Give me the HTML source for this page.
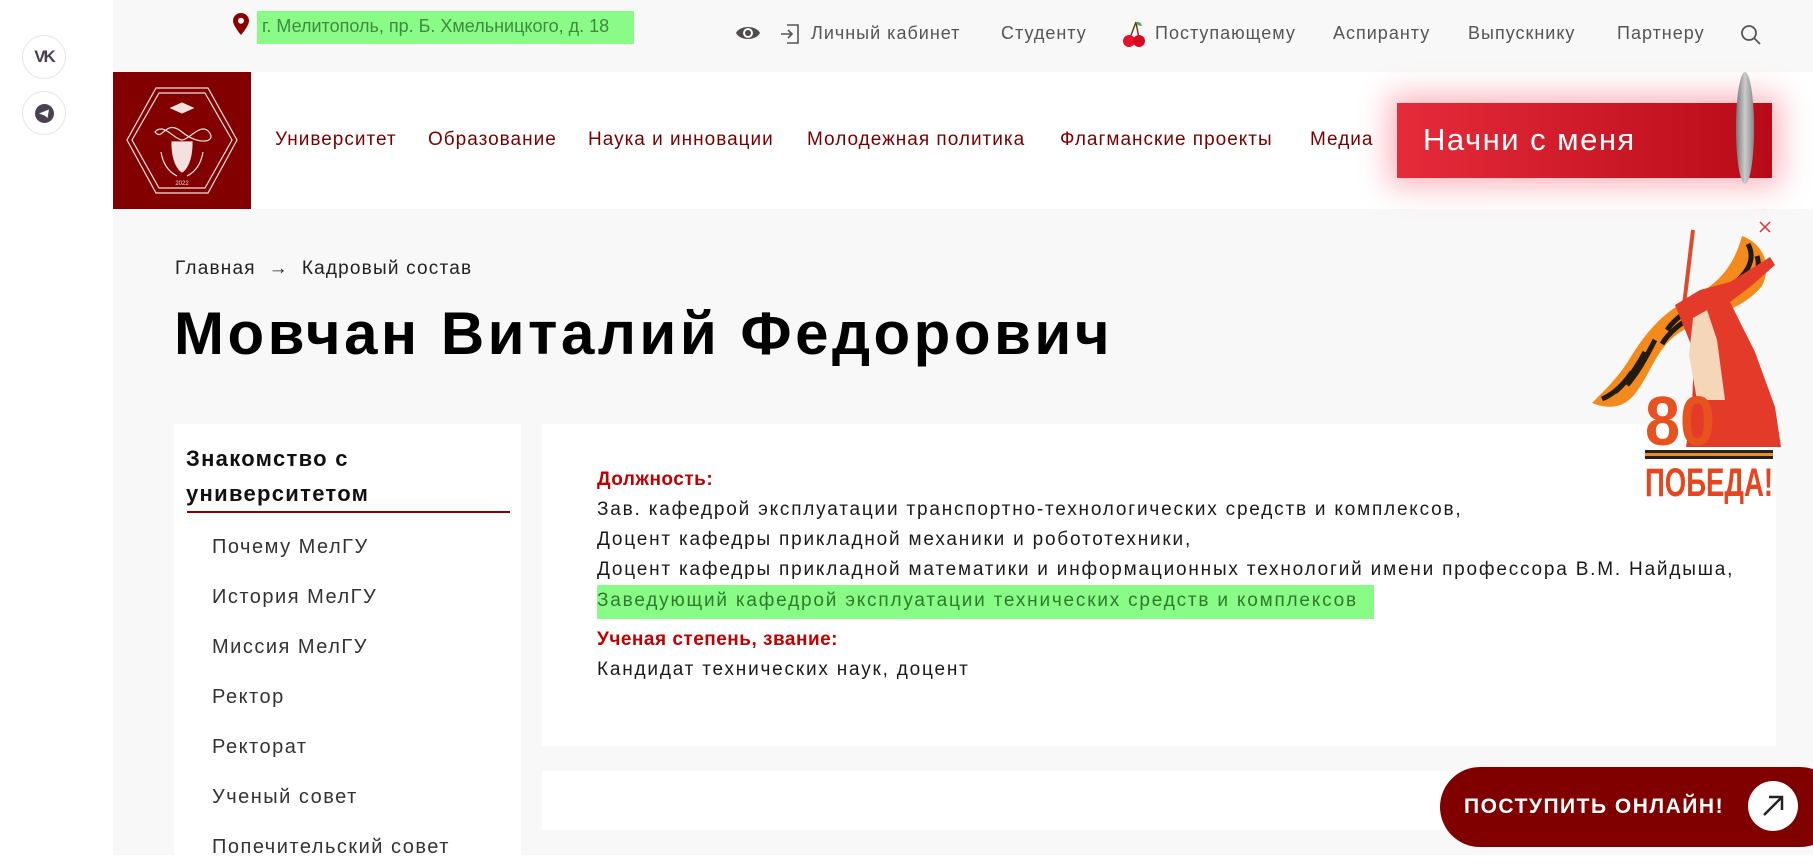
<!DOCTYPE html>
<html><head><meta charset="utf-8"><style>
*{margin:0;padding:0;box-sizing:border-box}
body{width:1813px;height:855px;overflow:hidden;background:#fff;font-family:"Liberation Sans",sans-serif;position:relative}
.a{position:absolute;white-space:nowrap}
.top{color:#555;font-size:18px;letter-spacing:1px}
.nav{color:#7a0000;font-size:19px;top:129px;letter-spacing:1px}
.side{color:#333;font-size:20px;left:212px;letter-spacing:1.5px}
.ct{font-size:19px;color:#1a1a1a;left:597px;letter-spacing:1.8px}
</style></head><body>
<div class="a" style="left:113px;top:0;width:1700px;height:855px;background:#f8f8f8"></div>
<!-- social -->
<div class="a" style="left:22px;top:35px;width:44px;height:44px;border:1px solid #e6e6e6;border-radius:50%;background:#fff;text-align:center;line-height:42px;font-weight:bold;font-size:17px;color:#4a4050;letter-spacing:-2px">VK</div>
<div class="a" style="left:22px;top:91px;width:44px;height:44px;border:1px solid #e6e6e6;border-radius:50%;background:#fff"><div style="margin:12px auto;width:19px;height:19px;border-radius:50%;background:#4a4050;position:relative"><svg width="19" height="19" viewBox="0 0 19 19" style="position:absolute;left:0;top:0"><path d="M4 9.5 L14 5.5 L12.5 14 L9.5 11.5 Z" fill="#fff"/></svg></div></div>
<!-- top bar -->
<svg class="a" style="left:233px;top:13px" width="16" height="22" viewBox="0 0 16 22"><path d="M8 0C3.6 0 0 3.4 0 7.8 0 13 8 22 8 22s8-9 8-14.2C16 3.4 12.4 0 8 0z" fill="#8b0000"/><circle cx="8" cy="7.8" r="3" fill="#f8f8f8"/></svg>
<div class="a" style="left:257px;top:11px;width:377px;height:33px;background:#88fc86"></div>
<div class="a" style="left:262px;top:16px;font-size:18px;color:#3f8a3f">г. Мелитополь, пр. Б. Хмельницкого, д. 18</div>
<svg class="a" style="left:735px;top:23px" width="26" height="20" viewBox="0 0 26 20"><path d="M1 10C5 2 21 2 25 10 21 18 5 18 1 10z" fill="#4e4a4e"/><circle cx="13" cy="10" r="5" fill="#f8f8f8"/><circle cx="13" cy="10" r="3" fill="#4e4a4e"/></svg>
<svg class="a" style="left:779px;top:23px" width="22" height="22" viewBox="0 0 22 22" fill="none" stroke="#555" stroke-width="1.6"><path d="M8 2h11v18H8M2 11h11M9 7l4 4-4 4"/></svg>
<div class="a top" style="left:811px;top:23px">Личный кабинет</div>
<div class="a top" style="left:1001px;top:23px">Студенту</div>
<svg class="a" style="left:1122px;top:20px" width="24" height="28" viewBox="0 0 24 28"><path d="M14 2 L8 18 M14 2 L17 19" stroke="#6b3a1f" stroke-width="1.5" fill="none"/><path d="M14 2 q5 -1 6 4 q-5 0 -6 -4z" fill="#4caf50"/><circle cx="7" cy="21" r="6" fill="#e8102a"/><circle cx="17" cy="21" r="6" fill="#d90a20"/></svg>
<div class="a top" style="left:1155px;top:23px">Поступающему</div>
<div class="a top" style="left:1333px;top:23px">Аспиранту</div>
<div class="a top" style="left:1468px;top:23px">Выпускнику</div>
<div class="a top" style="left:1617px;top:23px">Партнеру</div>
<svg class="a" style="left:1740px;top:24px" width="22" height="22" viewBox="0 0 22 22" fill="none" stroke="#555" stroke-width="1.8"><circle cx="9" cy="9" r="7"/><path d="M14 14l6 6"/></svg>
<!-- nav -->
<div class="a" style="left:113px;top:72px;width:1700px;height:137px;background:#fff"></div>
<div class="a" style="left:113px;top:72px;width:138px;height:137px;background:#830000">
<svg width="138" height="137" viewBox="0 0 138 137" fill="none" stroke="#f3e0e0" stroke-width="1.2"><path d="M43 16H95L124 68 95 121H43L14 68Z"/><path d="M46 21H92L119 68 92 116H46L19 68Z"/><path d="M42 60c8-10 20 8 27 8s19-18 27-8-10 14-27 0-19 10-27 0z"/><path d="M59 70c0 25 10 30 10 30s10-5 10-30z" fill="#f3e0e0"/><path d="M58 36l11-5 11 5-11 5z" fill="#f3e0e0"/><path d="M48 80c2 12 8 20 16 24M90 80c-2 12-8 20-16 24"/><text x="69" y="113" font-size="6" fill="#f3e0e0" stroke="none" text-anchor="middle">2022</text></svg></div>
<div class="a nav" style="left:275px">Университет</div>
<div class="a nav" style="left:428px">Образование</div>
<div class="a nav" style="left:588px">Наука и инновации</div>
<div class="a nav" style="left:807px">Молодежная политика</div>
<div class="a nav" style="left:1060px">Флагманские проекты</div>
<div class="a nav" style="left:1310px">Медиа</div>
<div class="a" style="left:1397px;top:103px;width:375px;height:75px;background:linear-gradient(90deg,#e62b3b,#b80a18);box-shadow:0 0 30px 8px rgba(240,40,60,.35)"></div>
<div class="a" style="left:1423px;top:122px;font-size:31px;color:#fff;letter-spacing:1.5px">Начни с меня</div>
<div class="a" style="left:1736px;top:72px;width:18px;height:112px;border-radius:50%;background:linear-gradient(90deg,#777,#ccc,#888)"></div>
<!-- breadcrumb / title -->
<div class="a" style="left:175px;top:258px;font-size:19px;color:#222;letter-spacing:1.2px">Главная &nbsp;→&nbsp; Кадровый состав</div>
<div class="a" style="left:174px;top:299px;font-size:60px;font-weight:bold;color:#000;letter-spacing:3.5px">Мовчан Виталий Федорович</div>
<!-- sidebar -->
<div class="a" style="left:174px;top:424px;width:347px;height:440px;background:#fff"></div>
<div class="a" style="left:186px;top:441px;font-size:22px;font-weight:bold;color:#111;line-height:35px;letter-spacing:1.3px">Знакомство с<br>университетом</div>
<div class="a" style="left:187px;top:511px;width:323px;height:2px;background:#8b0000"></div>
<div class="a side" style="top:536px">Почему МелГУ</div>
<div class="a side" style="top:586px">История МелГУ</div>
<div class="a side" style="top:636px">Миссия МелГУ</div>
<div class="a side" style="top:686px">Ректор</div>
<div class="a side" style="top:736px">Ректорат</div>
<div class="a side" style="top:786px">Ученый совет</div>
<div class="a side" style="top:836px">Попечительский совет</div>
<!-- content -->
<div class="a" style="left:542px;top:424px;width:1234px;height:322px;background:#fff"></div>
<div class="a" style="left:542px;top:771px;width:1234px;height:59px;background:#fff"></div>
<div class="a ct" style="top:469px;font-weight:bold;color:#c00000;letter-spacing:0.5px">Должность:</div>
<div class="a ct" style="top:499px">Зав. кафедрой эксплуатации транспортно-технологических средств и комплексов,</div>
<div class="a ct" style="top:529px">Доцент кафедры прикладной механики и робототехники,</div>
<div class="a ct" style="top:559px">Доцент кафедры прикладной математики и информационных технологий имени профессора В.М. Найдыша,</div>
<div class="a" style="left:597px;top:585px;width:777px;height:34px;background:#88fc86"></div>
<div class="a ct" style="top:590px;color:#2f7a2f">Заведующий кафедрой эксплуатации технических средств и комплексов</div>
<div class="a ct" style="top:629px;font-weight:bold;color:#c00000;letter-spacing:0.5px">Ученая степень, звание:</div>
<div class="a ct" style="top:659px">Кандидат технических наук, доцент</div>
<!-- victory -->
<svg class="a" style="left:1585px;top:215px" width="200" height="290" viewBox="1585 215 200 290">
<path d="M1760 222l10 10M1770 222l-10 10" stroke="#e03030" stroke-width="1.5"/>
<path d="M1742 236c22 8 30 30 20 50-20 25-55 30-80 45-25 15-30 40-45 60-10 15-25 20-45 12 15-15 25-25 35-40 15-25 30-45 55-60 30-15 50-30 60-67z" fill="#f28a1c"/>
<g stroke="#221a14" stroke-width="5" fill="none">
<path d="M1748 244c8 15 0 30-18 42"/><path d="M1757 256c5 15-5 28-25 38"/>
<path d="M1712 300c-20 8-35 15-45 30"/><path d="M1700 312c-15 8-30 18-38 32"/>
<path d="M1655 340c-8 15-15 30-28 45"/><path d="M1645 352c-8 15-18 30-30 40"/><path d="M1632 372c-8 12-18 22-30 27"/>
</g>
<path d="M1693 230l-9 75" stroke="#e04a2a" stroke-width="4"/>
<path d="M1675 305l25-15 30-8 40-25 5 8-25 22-20 15 25 50 20 55 6 40h-95l6-40 2-55z" fill="#e43a2a"/>
<path d="M1693 318l14-8 10 30 8 60h-28l-8-45z" fill="#f5d6b8"/>
<text x="1645" y="445" font-size="70" font-weight="bold" fill="#e8521e" font-family="Liberation Sans" textLength="70" lengthAdjust="spacingAndGlyphs">80</text>
<rect x="1645" y="450" width="128" height="3" fill="#222"/><rect x="1645" y="453" width="128" height="3" fill="#f28a1c"/><rect x="1645" y="456" width="128" height="3" fill="#222"/>
<text x="1645" y="496" font-size="40" font-weight="bold" fill="#e8451e" font-family="Liberation Sans" textLength="128" lengthAdjust="spacingAndGlyphs">ПОБЕДА!</text>
</svg>
<!-- online -->
<div class="a" style="left:1440px;top:767px;width:400px;height:80px;border-radius:40px;background:#800000"></div>
<div class="a" style="left:1464px;top:795px;font-size:21px;font-weight:bold;color:#fff;letter-spacing:1.5px">ПОСТУПИТЬ ОНЛАЙН!</div>
<div class="a" style="left:1748px;top:781px;width:50px;height:50px;border-radius:50%;background:#fff"><svg width="50" height="50" viewBox="0 0 50 50" fill="none" stroke="#222" stroke-width="2.5"><path d="M16 34L34 16M21 16h13v13"/></svg></div>
</body></html>
